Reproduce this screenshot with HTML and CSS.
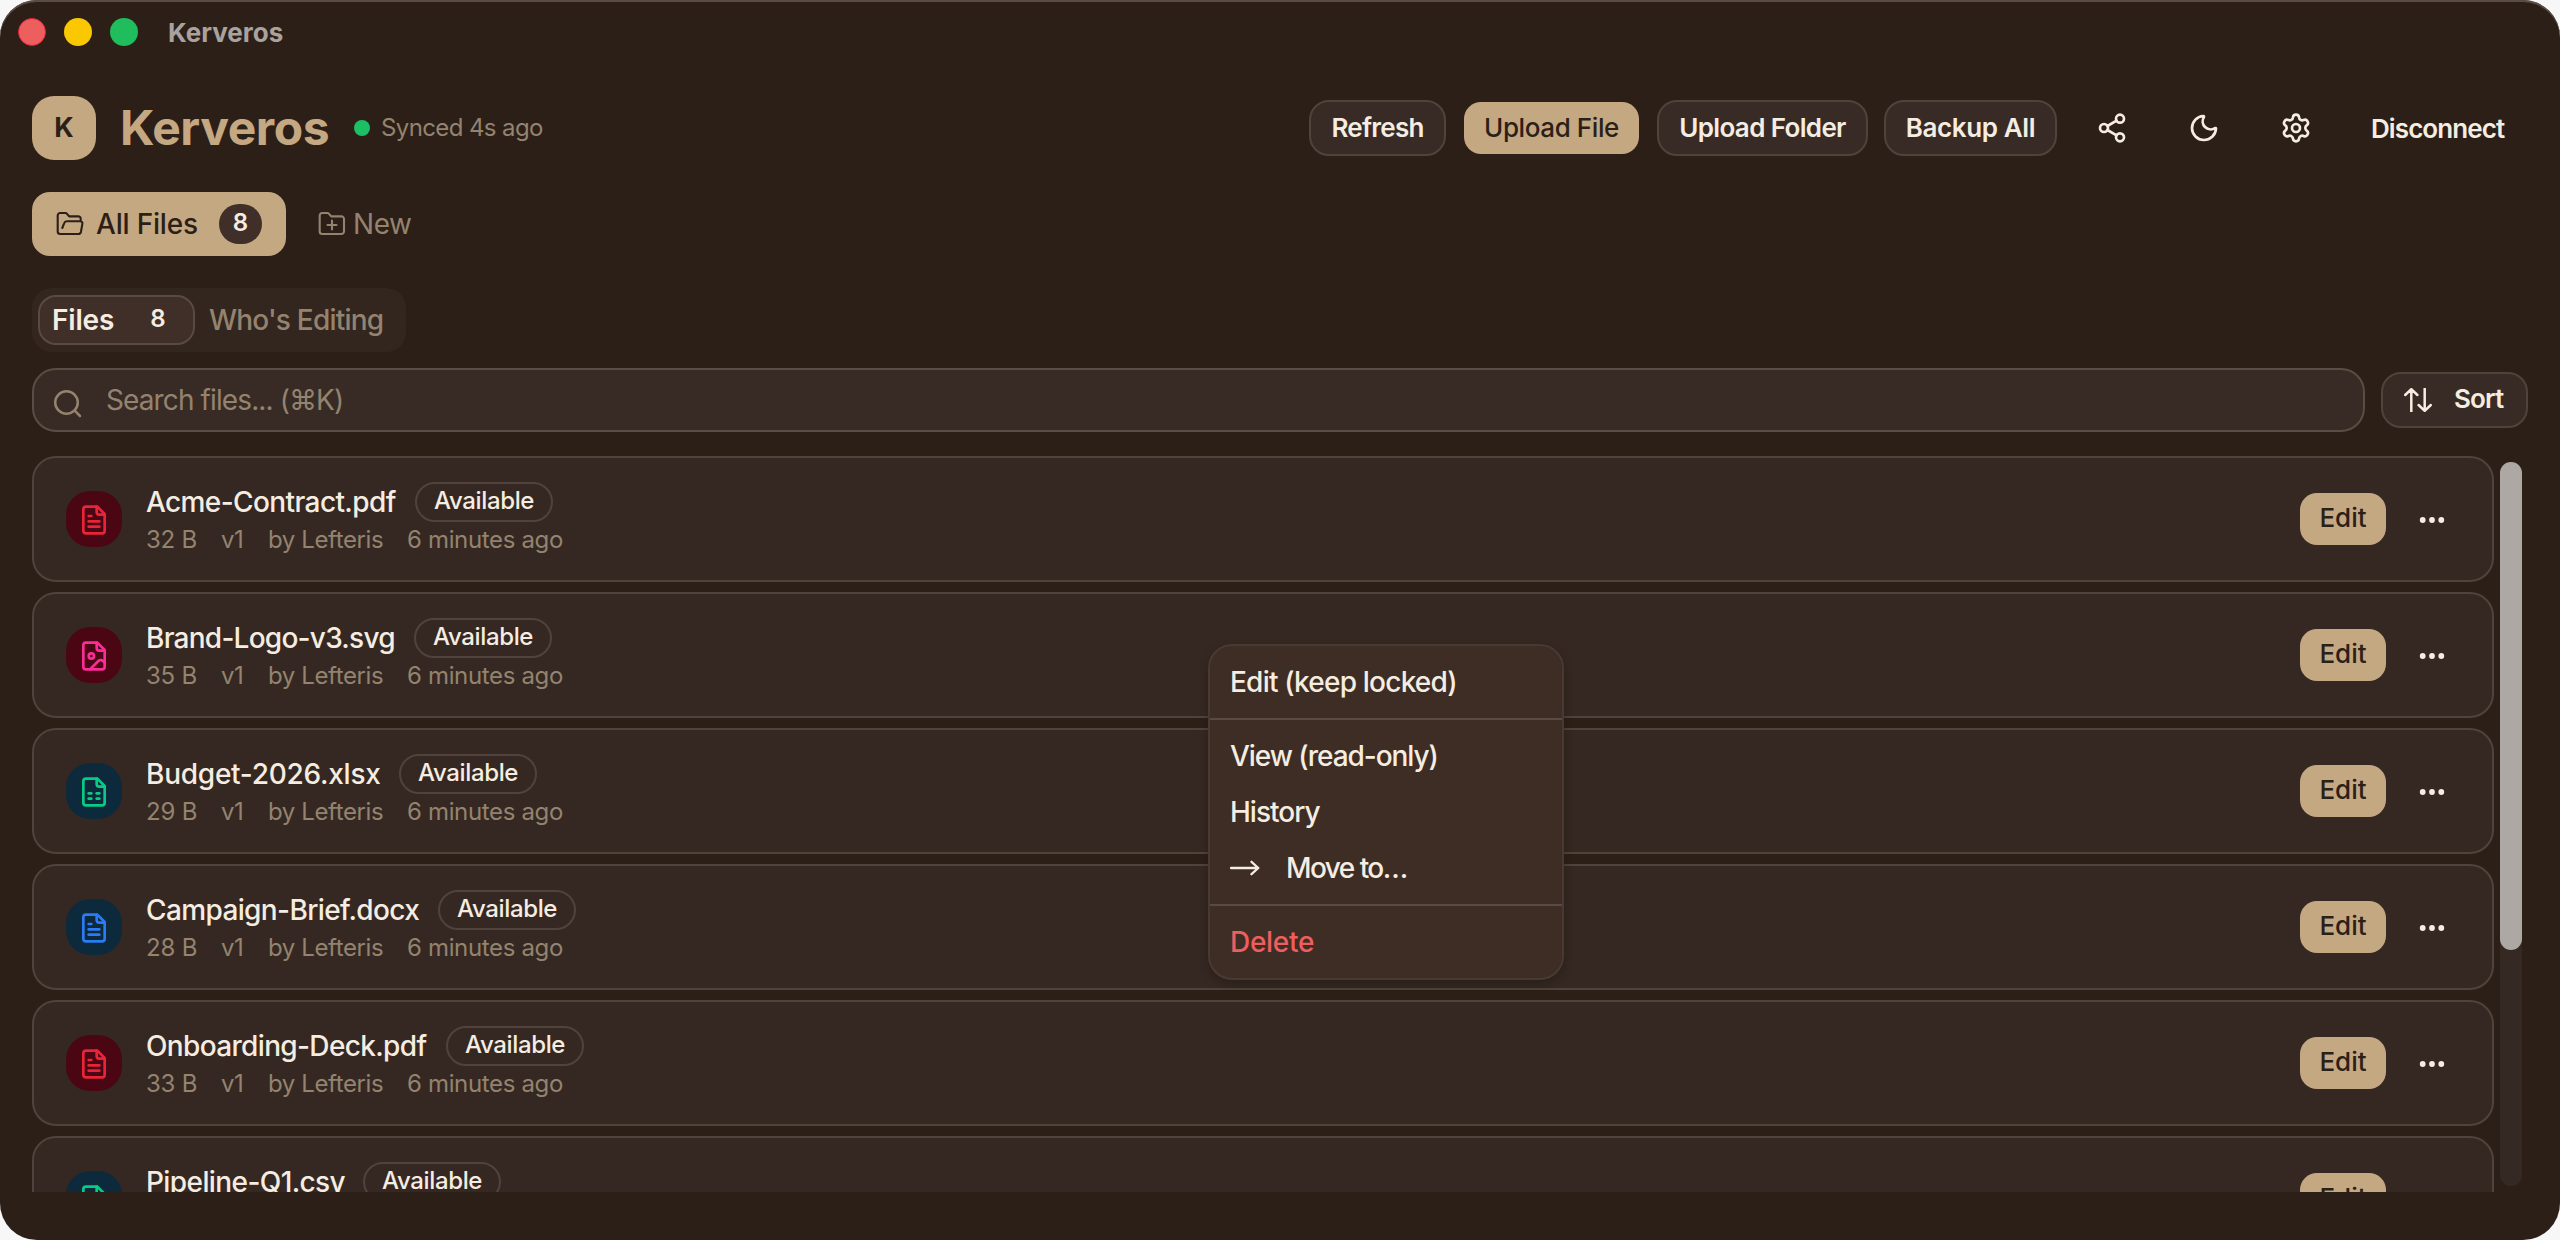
FILE: index.html
```html
<!DOCTYPE html>
<html lang="en">
<head>
<meta charset="utf-8">
<title>Kerveros</title>
<link rel="stylesheet" href="styles.css">
</head>
<body>
<svg class="defs" width="0" height="0" aria-hidden="true">
  <symbol id="file-text" viewBox="0 0 24 24"><path d="M14.5 2H6a2 2 0 0 0-2 2v16a2 2 0 0 0 2 2h12a2 2 0 0 0 2-2V7.500z"/><path d="M14 2v4a2 2 0 0 0 2 2h4"/><path d="M10 9H8"/><path d="M16 13H8"/><path d="M16 17H8"/></symbol>
  <symbol id="file-image" viewBox="0 0 24 24"><path d="M14.500 2H6a2 2 0 0 0-2 2v16a2 2 0 0 0 2 2h12a2 2 0 0 0 2-2V7.500z"/><path d="M14 2v4a2 2 0 0 0 2 2h4"/><circle cx="10" cy="12" r="2"/><path d="m20 17-1.296-1.296a2.410 2.410 0 0 0-3.408 0L9 22"/></symbol>
  <symbol id="file-sheet" viewBox="0 0 24 24"><path d="M14.500 2H6a2 2 0 0 0-2 2v16a2 2 0 0 0 2 2h12a2 2 0 0 0 2-2V7.500z"/><path d="M14 2v4a2 2 0 0 0 2 2h4"/><path d="M8 13h2"/><path d="M14 13h2"/><path d="M8 17h2"/><path d="M14 17h2"/></symbol>
  <symbol id="dots" viewBox="0 0 32 32"><circle cx="6.700" cy="16" r="2.900"/><circle cx="16" cy="16" r="2.900"/><circle cx="25.300" cy="16" r="2.900"/></symbol>
</svg>

<div class="window">
  <div class="titlebar">
    <span class="light red"></span><span class="light yellow"></span><span class="light green"></span>
    <span class="window-title">Kerveros</span>
  </div>

  <header class="header">
    <div class="logo">K</div>
    <h1 class="brand">Kerveros</h1>
    <span class="sync-dot"></span>
    <span class="sync">Synced 4s ago</span>
    <div class="actions">
      <button class="btn refresh">Refresh</button>
      <button class="btn primary upload-file">Upload File</button>
      <button class="btn upload-folder">Upload Folder</button>
      <button class="btn backup">Backup All</button>
      <div class="icon-actions">
        <svg class="icon" viewBox="0 0 24 24"><circle cx="18" cy="5" r="3"/><circle cx="6" cy="12" r="3"/><circle cx="18" cy="19" r="3"/><path d="m8.590 13.510 6.830 3.980M15.410 6.510l-6.820 3.980"/></svg>
        <svg class="icon" viewBox="0 0 24 24"><path d="M20.985 12.486a9 9 0 1 1-9.473-9.472c.405-.022.617.460.402.803a6 6 0 0 0 8.268 8.268c.344-.215.825-.004.803.401"/></svg>
        <svg class="icon" viewBox="0 0 24 24"><path d="M9.671 4.136a2.340 2.340 0 0 1 4.659 0 2.340 2.340 0 0 0 3.319 1.915 2.340 2.340 0 0 1 2.330 4.033 2.340 2.340 0 0 0 0 3.831 2.340 2.340 0 0 1-2.330 4.033 2.340 2.340 0 0 0-3.319 1.915 2.340 2.340 0 0 1-4.659 0 2.340 2.340 0 0 0-3.320-1.915 2.340 2.340 0 0 1-2.330-4.033 2.340 2.340 0 0 0 0-3.831A2.340 2.340 0 0 1 6.350 6.051a2.340 2.340 0 0 0 3.319-1.915"/><circle cx="12" cy="12" r="3"/></svg>
      </div>
      <span class="disconnect">Disconnect</span>
    </div>
  </header>

  <nav class="folders">
    <div class="folder-chip">
      <svg class="folder-icon" viewBox="0 0 28 28"><path d="M24.700 11V8.800a2.400 2.400 0 0 0-2.400-2.400H13.200L10.800 3.600A1.800 1.800 0 0 0 9.500 3H4.200A2.500 2.500 0 0 0 1.700 5.500V21.500A2.500 2.500 0 0 0 4.200 24H22.500A2.500 2.500 0 0 0 24.900 22L26.400 13.600A2 2 0 0 0 24.400 11.300H11A3 3 0 0 0 8.100 13.300L6.300 18"/></svg>
      <span class="chip-label">All Files</span>
      <span class="count">8</span>
    </div>
    <div class="new-folder">
      <svg class="folder-icon" viewBox="0 0 28 28"><path d="M1.700 5.500A2.500 2.500 0 0 1 4.200 3H9.500a1.800 1.800 0 0 1 1.300.600L13.200 6.400H23.500A2.500 2.500 0 0 1 26 8.900V21.500A2.500 2.500 0 0 1 23.500 24H4.200A2.500 2.500 0 0 1 1.700 21.500ZM14 10.500v9M9.500 15h9"/></svg>
      <span>New</span>
    </div>
  </nav>

  <div class="tabs">
    <div class="tab active"><span>Files</span><span class="tab-count">8</span></div>
    <div class="tab-idle">Who's Editing</div>
  </div>

  <div class="toolbar">
    <div class="search">
      <svg class="search-icon" viewBox="0 0 30 30"><circle cx="13.500" cy="13.500" r="11.300"/><path d="m21.700 21.700 5.300 5.300"/></svg>
      <span>Search files... (⌘K)</span>
    </div>
    <button class="btn sort">
      <svg class="sort-icon" viewBox="0 0 28 24"><path d="M7.300 23.500V1.500M1.200 7 7.300 1.200 13.400 7M20.700.500V22.500M14.600 17l6.100 5.800L26.800 17"/></svg>
      <span>Sort</span>
    </button>
  </div>

  <main class="files">
    <div class="list">
      <div class="row">
        <div class="tile pdf"><svg><use href="#file-text"/></svg></div>
        <div class="info"><div class="line"><span class="name n1">Acme-Contract.pdf</span><span class="status">Available</span></div>
        <div class="meta"><span class="size">32 B</span><span class="ver">v1</span><span class="by">by Lefteris</span><span>6 minutes ago</span></div></div>
        <button class="btn primary edit">Edit</button><svg class="dots"><use href="#dots"/></svg>
      </div>
      <div class="row">
        <div class="tile img"><svg><use href="#file-image"/></svg></div>
        <div class="info"><div class="line"><span class="name n2">Brand-Logo-v3.svg</span><span class="status">Available</span></div>
        <div class="meta"><span class="size">35 B</span><span class="ver">v1</span><span class="by">by Lefteris</span><span>6 minutes ago</span></div></div>
        <button class="btn primary edit">Edit</button><svg class="dots"><use href="#dots"/></svg>
      </div>
      <div class="row">
        <div class="tile sheet"><svg><use href="#file-sheet"/></svg></div>
        <div class="info"><div class="line"><span class="name n3">Budget-2026.xlsx</span><span class="status">Available</span></div>
        <div class="meta"><span class="size">29 B</span><span class="ver">v1</span><span class="by">by Lefteris</span><span>6 minutes ago</span></div></div>
        <button class="btn primary edit">Edit</button><svg class="dots"><use href="#dots"/></svg>
      </div>
      <div class="row">
        <div class="tile doc"><svg><use href="#file-text"/></svg></div>
        <div class="info"><div class="line"><span class="name n4">Campaign-Brief.docx</span><span class="status">Available</span></div>
        <div class="meta"><span class="size">28 B</span><span class="ver">v1</span><span class="by">by Lefteris</span><span>6 minutes ago</span></div></div>
        <button class="btn primary edit">Edit</button><svg class="dots"><use href="#dots"/></svg>
      </div>
      <div class="row">
        <div class="tile pdf"><svg><use href="#file-text"/></svg></div>
        <div class="info"><div class="line"><span class="name n5">Onboarding-Deck.pdf</span><span class="status">Available</span></div>
        <div class="meta"><span class="size">33 B</span><span class="ver">v1</span><span class="by">by Lefteris</span><span>6 minutes ago</span></div></div>
        <button class="btn primary edit">Edit</button><svg class="dots"><use href="#dots"/></svg>
      </div>
      <div class="row">
        <div class="tile sheet"><svg><use href="#file-sheet"/></svg></div>
        <div class="info"><div class="line"><span class="name n6">Pipeline-Q1.csv</span><span class="status">Available</span></div></div>
        <button class="btn primary edit">Edit</button><svg class="dots"></svg>
      </div>
    </div>
    <div class="scrollbar"><div class="thumb"></div></div>
  </main>

  <div class="menu">
    <div class="group"><div class="item m-edit">Edit (keep locked)</div></div>
    <div class="group"><div class="item m-view">View (read-only)</div><div class="item m-hist">History</div>
      <div class="item m-move"><svg class="arrow" viewBox="0 0 30 16"><path d="M1 8h27M21.500 1.800 28.300 8l-6.800 6.200"/></svg><span>Move to…</span></div></div>
    <div class="group"><div class="item m-delete">Delete</div></div>
  </div>
</div>
</body>
</html>
```
FILE: styles.css
```css
* { box-sizing: border-box; }
body {
  margin: 0;
  background: #f7f7f7;
  font-family: Inter, "Noto Sans", "DejaVu Sans", sans-serif;
  font-size: 28px;
  color: #f5ede1;
  white-space: nowrap;
}
svg { display: block; flex: none; fill: none; stroke: currentColor; stroke-linecap: round; stroke-linejoin: round; }
.defs { position: absolute; }
.window {
  position: relative;
  width: 2560px;
  height: 1240px;
  padding: 0 32px;
  overflow: hidden;
  border-radius: 37px;
  background: #2c1f18;
  box-shadow: inset 0 2px 0 #5b4d43;
  display: flex;
  flex-direction: column;
}
.titlebar { height: 64px; margin: 0 0 32px -14px; display: flex; align-items: center; flex: none; }
.light { width: 28px; height: 28px; border-radius: 50%; margin-right: 18px; }
.red { background: #ed5f5f; border: 1px solid #e02438; }
.yellow { background: #fac800; }
.green { background: #1fbd5c; }
.window-title { margin-left: 12px; font-size: 26px; font-weight: 700; color: #aaa29d; }

.header { height: 64px; display: flex; align-items: center; flex: none; }
.logo { width: 64px; height: 64px; border-radius: 22px; background: #c4a882; color: #2c1f18; font-size: 27px; font-weight: 700; line-height: 64px; text-align: center; }
.brand { margin: 0 0 0 24px; font-size: 48px; font-weight: 700; line-height: 64px; letter-spacing: -.45px; color: #c4a882; width: 234px; }
.sync-dot { width: 16px; height: 16px; border-radius: 50%; background: #1cbf63; margin-right: 11px; }
.sync { margin-top: -2px; font-size: 24px; letter-spacing: -.61px; color: #93836f; }
.btn {
  height: 56px; padding: 0 0 2px; border: 2px solid #50433b; border-radius: 20px; background: #382b25; color: #f5ede1;
  font: 600 26px/1 Inter, sans-serif; display: flex; align-items: center; justify-content: center; flex: none;
}
.btn.primary { height: 52px; border: 0; border-radius: 17px; background: #c4a882; color: #2c1f18; font-weight: 500; }
.actions { margin-left: auto; display: flex; align-items: center; }
.actions .btn { padding-bottom: 0; }
.refresh { width: 137px; letter-spacing: -.75px; margin-right: 18px; }
.upload-file { width: 175px; letter-spacing: -.4px; margin-right: 18px; }
.upload-folder { width: 211px; letter-spacing: -.64px; margin-right: 16px; }
.backup { width: 173px; letter-spacing: -.38px; margin-right: 39px; }
.icon-actions { display: flex; gap: 60px; }
.icon { width: 32px; height: 32px; stroke-width: 2; }
.disconnect { margin-left: 59px; width: 157px; font-size: 26px; font-weight: 600; letter-spacing: -.91px; }

.folders { height: 64px; margin-top: 32px; display: flex; align-items: center; flex: none; }
.folder-chip { width: 254px; height: 64px; padding: 0 24px; border-radius: 18px; background: #c4a882; color: #2c1f18; display: flex; align-items: center; }
.folder-icon { width: 28px; height: 28px; stroke-width: 2.100; }
.chip-label { margin-left: 12px; width: 123px; font-weight: 500; letter-spacing: -.19px; }
.count { width: 43px; height: 40px; border-radius: 20px; background: #3f2f28; color: #f5ede1; font-size: 24px; font-weight: 600; line-height: 37px; text-align: center; }
.new-folder { margin-left: 32px; display: flex; align-items: center; gap: 7px; color: #93836f; letter-spacing: -.46px; }

.tabs { width: 374px; height: 64px; margin-top: 32px; padding: 0 6px; border-radius: 20px; background: #33261f; display: flex; align-items: center; flex: none; }
.tab { width: 157px; height: 50px; padding: 0 0 0 12px; border: 2px solid #584b43; border-radius: 18px; background: #3f2f28; display: flex; align-items: center; font-weight: 600; letter-spacing: -.17px; }
.tab-count { margin: -3px 0 0 36px; font-size: 24px; }
.tab-idle { margin-left: 14px; font-weight: 550; letter-spacing: -.8px; color: #93836f; }

.toolbar { height: 64px; margin-top: 16px; display: flex; align-items: center; gap: 16px; flex: none; }
.search { flex: 1; height: 64px; padding: 0 0 0 19px; border: 2px solid #5a4d44; border-radius: 24px; background: #382b25; color: #93836f; display: flex; align-items: center; letter-spacing: -.89px; }
.search-icon { width: 30px; height: 30px; margin: 8px 23px 0 0; stroke-width: 2.500; }
.sort { width: 147px; justify-content: flex-start; padding-left: 21px; letter-spacing: -.84px; }
.sort-icon { width: 28px; height: 24px; margin: 2px 22px 0 0; stroke-width: 2.500; }

.files { height: 736px; margin-top: 24px; display: flex; gap: 6px; overflow: hidden; flex: none; }
.list { width: 2462px; display: flex; flex-direction: column; gap: 10px; }
.row { height: 126px; padding: 0 44px 0 32px; border: 2px solid #50433b; border-radius: 24px; background: #352822; display: flex; align-items: center; flex: none; }
.tile { width: 56px; height: 56px; border-radius: 24px; display: flex; align-items: center; justify-content: center; }
.tile svg { width: 32px; height: 32px; stroke-width: 2; margin-top: 2px; }
.pdf { background: #4a0713; color: #e82538; }
.img { background: #4a0713; color: #fa2d96; }
.sheet { background: #0c2a3b; color: #0acb85; }
.doc { background: #0c2a3b; color: #2a7bf4; }
.info { margin-left: 24px; flex: 1; height: 74px; }
.line { height: 40px; display: flex; align-items: center; }
.name { font-weight: 550; width: 269px; }
.n1 { letter-spacing: -.6px; }
.n2 { width: 268px; letter-spacing: -.75px; }
.n3 { width: 253px; letter-spacing: -.25px; }
.n4 { width: 292px; letter-spacing: -.62px; }
.n5 { width: 300px; letter-spacing: -.65px; }
.n6 { width: 217px; letter-spacing: -.6px; }
.status { width: 138px; height: 40px; border: 2px solid #50433b; border-radius: 20px; font-size: 24px; font-weight: 550; line-height: 33px; text-align: center; letter-spacing: -.35px; }
.meta { height: 34px; padding-top: 2px; line-height: 32px; display: flex; font-size: 24px; color: #93836f; }
.size { width: 75px; letter-spacing: -.2px; }
.ver { width: 47px; letter-spacing: -.4px; }
.by { width: 139px; letter-spacing: -.39px; }
.by + span { letter-spacing: -.34px; }
.btn.edit { width: 86px; }
.dots { width: 32px; height: 32px; margin: 2px 0 0 30px; fill: currentColor; stroke: none; }
.scrollbar { width: 22px; height: 724px; margin-top: 6px; border-radius: 11px; background: #352a23; }
.thumb { height: 488px; border-radius: 11px; background: #ada8a3; }

.menu { position: absolute; left: 1208px; top: 644px; width: 356px; border: 2px solid #483a32; border-radius: 24px; background: #3e2d24; box-shadow: 0 4px 8px rgba(20, 12, 8, .3); }
.group { padding: 8px 0; }
.group + .group { border-top: 2px solid #584b43; }
.item { height: 56px; padding: 0 20px; display: flex; align-items: center; font-weight: 500; }
.m-edit { letter-spacing: -.78px; }
.m-view { letter-spacing: -1.05px; }
.m-hist { letter-spacing: -1px; }
.m-move { letter-spacing: -1.55px; }
.arrow { width: 30px; height: 16px; margin-right: 26px; stroke-width: 2.300; }
.m-delete { color: #ed5f5f; letter-spacing: -.28px; }
```
